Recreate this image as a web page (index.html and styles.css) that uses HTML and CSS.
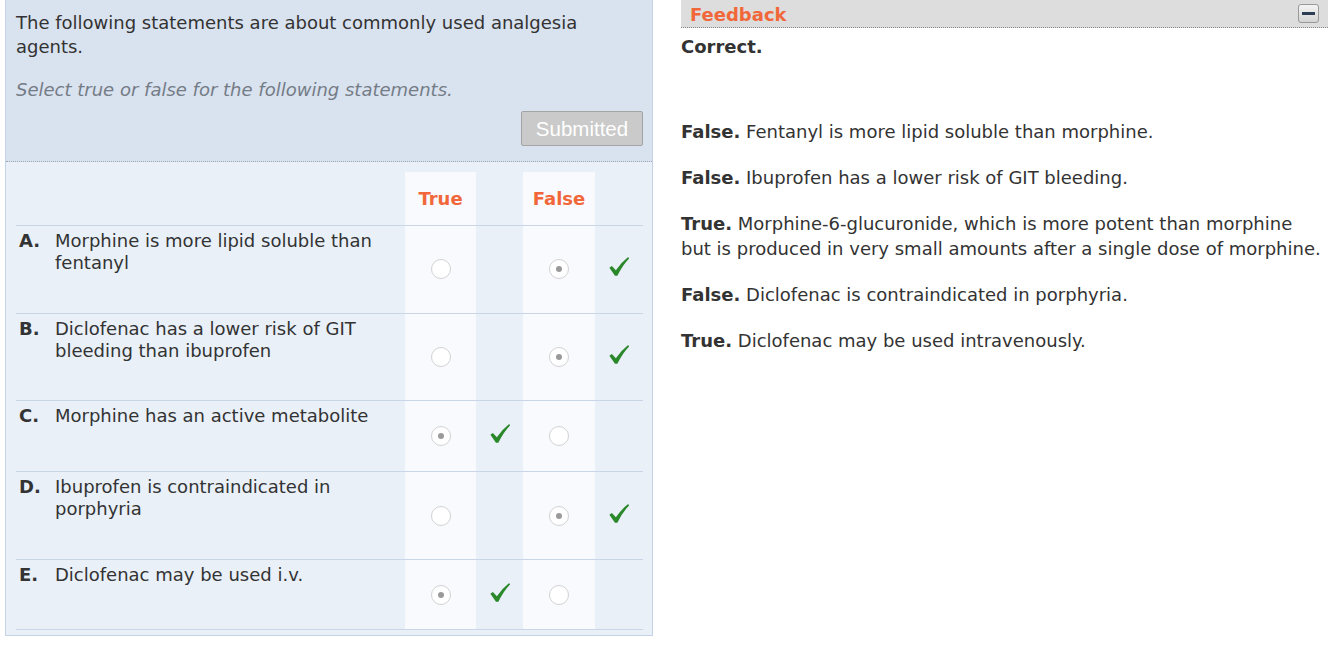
FILE: index.html
```html
<!DOCTYPE html>
<html>
<head>
<meta charset="utf-8">
<link rel="stylesheet" href="styles.css">
</head>
<body>
<div class="page">
  <div class="question">
    <div class="q-head">
      <p class="q-text">The following statements are about commonly used analgesia agents.</p>
      <p class="q-instr">Select true or false for the following statements.</p>
      <div class="btn-row"><button class="btn">Submitted</button></div>
    </div>
    <div class="q-body">
      <div class="grid">
        <div class="hcell"></div>
        <div class="hcell col-opt">True</div>
        <div class="hcell"></div>
        <div class="hcell col-opt">False</div>
        <div class="hcell"></div>

        <div class="cell text"><b class="lbl">A.</b><span>Morphine is more lipid soluble than fentanyl</span></div>
        <div class="cell col-opt"><span class="radio"></span></div>
        <div class="cell"></div>
        <div class="cell col-opt"><span class="radio on"></span></div>
        <div class="cell"><svg class="tick" viewBox="0 0 24 24"><path d="M1.5 12.8 L4.2 10.8 L8.6 15.6 Q14 7.5 22 1.2 L23 2.6 Q15.8 10 10.2 21.6 L7.6 21.6 Z"/></svg></div>

        <div class="cell text"><b class="lbl">B.</b><span>Diclofenac has a lower risk of GIT bleeding than ibuprofen</span></div>
        <div class="cell col-opt"><span class="radio"></span></div>
        <div class="cell"></div>
        <div class="cell col-opt"><span class="radio on"></span></div>
        <div class="cell"><svg class="tick" viewBox="0 0 24 24"><path d="M1.5 12.8 L4.2 10.8 L8.6 15.6 Q14 7.5 22 1.2 L23 2.6 Q15.8 10 10.2 21.6 L7.6 21.6 Z"/></svg></div>

        <div class="cell text"><b class="lbl">C.</b><span>Morphine has an active metabolite</span></div>
        <div class="cell col-opt"><span class="radio on"></span></div>
        <div class="cell"><svg class="tick" viewBox="0 0 24 24"><path d="M1.5 12.8 L4.2 10.8 L8.6 15.6 Q14 7.5 22 1.2 L23 2.6 Q15.8 10 10.2 21.6 L7.6 21.6 Z"/></svg></div>
        <div class="cell col-opt"><span class="radio"></span></div>
        <div class="cell"></div>

        <div class="cell text"><b class="lbl">D.</b><span>Ibuprofen is contraindicated in porphyria</span></div>
        <div class="cell col-opt"><span class="radio"></span></div>
        <div class="cell"></div>
        <div class="cell col-opt"><span class="radio on"></span></div>
        <div class="cell"><svg class="tick" viewBox="0 0 24 24"><path d="M1.5 12.8 L4.2 10.8 L8.6 15.6 Q14 7.5 22 1.2 L23 2.6 Q15.8 10 10.2 21.6 L7.6 21.6 Z"/></svg></div>

        <div class="cell text last"><b class="lbl">E.</b><span>Diclofenac may be used i.v.</span></div>
        <div class="cell col-opt last"><span class="radio on"></span></div>
        <div class="cell last"><svg class="tick" viewBox="0 0 24 24"><path d="M1.5 12.8 L4.2 10.8 L8.6 15.6 Q14 7.5 22 1.2 L23 2.6 Q15.8 10 10.2 21.6 L7.6 21.6 Z"/></svg></div>
        <div class="cell col-opt last"><span class="radio"></span></div>
        <div class="cell last"></div>
      </div>
    </div>
  </div>

  <div class="feedback">
    <div class="fb-head">
      <span class="fb-title">Feedback</span>
      <span class="fb-toggle"><span class="bar"></span></span>
    </div>
    <p class="fb-result">Correct.</p>
    <div class="fb-list">
      <p><b>False.</b> Fentanyl is more lipid soluble than morphine.</p>
      <p><b>False.</b> Ibuprofen has a lower risk of GIT bleeding.</p>
      <p><b>True.</b> Morphine-6-glucuronide, which is more potent than morphine but is produced in very small amounts after a single dose of morphine.</p>
      <p><b>False.</b> Diclofenac is contraindicated in porphyria.</p>
      <p><b>True.</b> Diclofenac may be used intravenously.</p>
    </div>
  </div>
</div>
</body>
</html>
```

FILE: styles.css
```css
* { box-sizing: border-box; }
html, body { margin: 0; padding: 0; background: #fff; }
body {
  font-family: "DejaVu Sans", Verdana, sans-serif;
  font-size: 18px;
  color: #333;
}
p { margin: 0; }

.page {
  display: flex;
  align-items: flex-start;
  padding-left: 5px;
}

.question {
  width: 648px;
  border: 1px solid #c4d3e6;
  border-top: none;
  background: #e9f0f8;
}

.q-head {
  background: #d9e2ef;
  padding: 11px 9px 15px 10px;
  border-bottom: 1px dotted #9aa6b4;
}
.q-text { line-height: 24px; }
.q-instr {
  margin-top: 19px;
  line-height: 24px;
  font-style: italic;
  color: #747c86;
}
.btn-row {
  display: flex;
  justify-content: flex-end;
  margin-top: 9px;
}
.btn {
  width: 122px;
  height: 35px;
  background: #cacaca;
  border: 1px solid #a4a4a4;
  border-radius: 2px;
  color: #fff;
  font-family: "Liberation Sans", Arial, sans-serif;
  font-size: 20.5px;
  padding: 0;
}

.q-body {
  padding: 10px 9px 5px 10px;
}
.grid {
  display: grid;
  grid-template-columns: 389px 71px 47px 72px 48px;
}
.hcell {
  height: 53px;
  display: flex;
  align-items: center;
  justify-content: center;
  color: #f1673a;
  font-weight: bold;
  font-size: 18px;
}
.col-opt { background: #f8fafd; }

.cell {
  border-top: 1px solid #c8d6e7;
  min-height: 71px;
  display: flex;
  align-items: center;
  justify-content: center;
}
.cell.last { border-bottom: 1px solid #c8d6e7; }
.cell.text {
  align-items: flex-start;
  justify-content: flex-start;
  padding: 4px 20px 38.7px 3px;
  line-height: 22px;
}
.lbl {
  width: 36px;
  flex: none;
  font-weight: bold;
}

.radio {
  width: 20px;
  height: 20px;
  border-radius: 50%;
  border: 1px solid #d2d2d2;
  background: #fff;
  display: flex;
  align-items: center;
  justify-content: center;
}
.radio.on::after {
  content: "";
  width: 6px;
  height: 6px;
  border-radius: 50%;
  background: #9a9a9a;
}

.tick {
  width: 22px;
  height: 22px;
  fill: #2a872a;
  margin-top: -4px;
}

.feedback {
  margin-left: 28px;
  width: 647px;
}
.fb-head {
  height: 28px;
  background: #dddddd;
  border-bottom: 1px dotted #8a8a8a;
  display: flex;
  align-items: center;
  justify-content: space-between;
  padding: 0 9px 0 9px;
}
.fb-title {
  color: #f1673a;
  font-weight: bold;
  font-size: 18px;
  margin-top: 2px;
}
.fb-toggle {
  width: 21px;
  height: 19px;
  border: 1px solid #999;
  border-radius: 3px;
  background: linear-gradient(#f4f4f4, #d4d4d4);
  display: flex;
  align-items: center;
  justify-content: center;
}
.fb-toggle .bar {
  width: 13px;
  height: 3px;
  background: #2c3d55;
}
.fb-result {
  font-weight: bold;
  line-height: 25px;
  margin-top: 6px;
}
.fb-list {
  margin-top: 60px;
  max-width: 644px;
}
.fb-list p {
  line-height: 25px;
  margin-bottom: 21px;
}
```
